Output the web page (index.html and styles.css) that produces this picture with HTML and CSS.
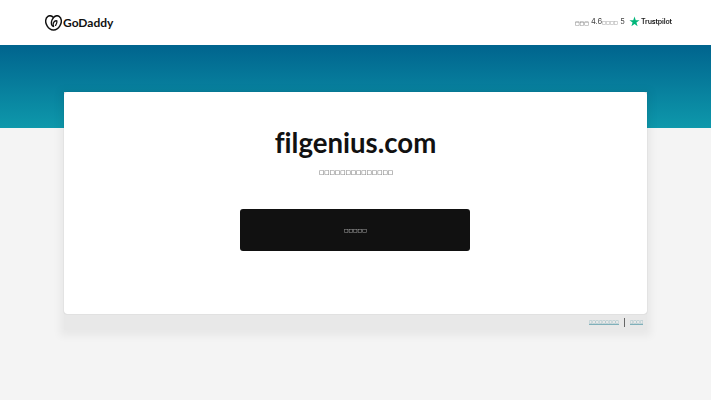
FILE: index.html
```html
<!DOCTYPE html>
<html lang="en">
<head>
<meta charset="utf-8">
<title>filgenius.com</title>
<link rel="stylesheet" href="styles.css">
</head>
<body>
<header class="topbar">
  <a class="logo" href="#">
    <svg class="logo-mark" viewBox="0 0 20 18" width="17" height="16" aria-hidden="true">
      <path d="M16.600 1.200c-2-1.300-4.700-.6-6.600 1.300C8.100.6 5.400-.1 3.400 1.200.3 3.200-.1 8.300 2.500 12.500c1.900 3.100 5 4.900 7.500 4.800 2.500.1 5.600-1.700 7.500-4.800 2.600-4.200 2.200-9.300-.9-11.300z" fill="none" stroke="#111" stroke-width="1.700"/>
      <path d="M10 2.600C8 5 7 8 7.600 10.500c.3 1.200 1 2.100 2 2.600M14 6.500c-1.700-.5-3.500.7-4.200 2.700-.4 1.300-.3 2.700.4 3.600M14 6.500c.2 1.700-.3 3.700-1.500 5.300" fill="none" stroke="#111" stroke-width="1.500" stroke-linecap="round"/>
    </svg>
    <span class="logo-text">GoDaddy</span>
  </a>
  <div class="rating">
    <span class="box-text rating-label">□□□</span>
    <span class="rating-score">4.6<span class="box-text tofu">□□□□</span> 5</span>
    <span class="trustpilot">
      <svg class="tp-star" viewBox="0 0 24 24" width="11" height="11" aria-hidden="true"><path d="M12 1l2.700 8.200H23l-6.800 5 2.600 8.100L12 17.300l-6.800 5 2.600-8.100L1 9.200h8.300z" fill="#00b67a"/></svg>
      <span class="tp-text">Trustpilot</span>
    </span>
  </div>
</header>
<main class="stage">
  <div class="panel">
    <section class="card">
      <h1 class="domain">filgenius.com</h1>
      <p class="subtitle"><span class="box-text">□□□□□□□□□□□□□□</span></p>
      <a class="cta" href="#"><span class="box-text">□□□□□</span></a>
    </section>
    <footer class="legal">
      <a href="#" class="legal-link"><span class="box-text">□□□□□□□□□</span></a>
      <span class="legal-sep"></span>
      <a href="#" class="legal-link"><span class="box-text">□□□□</span></a>
    </footer>
  </div>
</main>
</body>
</html>
```
FILE: styles.css
```css
* { box-sizing: border-box; }
html, body { margin: 0; height: 100%; }
body {
  background: #f4f4f4;
  font-family: "Lato", "Liberation Sans", sans-serif;
  color: #111;
  overflow: hidden;
}
a { color: inherit; text-decoration: none; }
.box-text {
  font-family: "DejaVu Sans", sans-serif;
  display: inline-block;
  will-change: transform;
}
.topbar {
  height: 45px;
  background: #fff;
  display: flex;
  align-items: center;
  justify-content: space-between;
  padding: 0 39px 0 45px;
}
.logo { display: flex; align-items: center; gap: 1px; }
.logo-mark { display: block; }
.logo-text {
  font-size: 12px;
  font-weight: 700;
  color: #111;
}
.rating {
  display: flex;
  align-items: center;
  font-size: 7.500px;
  color: #444;
  margin-top: -2px;
}
.rating-label { font-size: 4.900px; color: #333; margin-right: 3px; margin-top: 2px; }
.rating-score { margin-right: 4px; font-family: "Inter", sans-serif; will-change: transform; }
.tofu { font-size: 4.200px; color: #555; }
.trustpilot { display: flex; align-items: center; gap: 1px; }
.tp-text { font-family: "Inter", sans-serif; font-size: 7px; font-weight: 600; color: #191919; letter-spacing: -0.15px; will-change: transform; }
.stage {
  background:
    linear-gradient(#00648e, #0e98ab) top / 100% 83px no-repeat;
  padding-top: 47px;
  display: flex;
  justify-content: center;
}
.panel {
  width: 583px;
  background: #e8e8e8;
  box-shadow: 0 2px 8px 4px rgba(0, 0, 0, 0.05);
}
.card {
  height: 222px;
  background: #fff;
  border-radius: 3px;
  display: flex;
  flex-direction: column;
  align-items: center;
  box-shadow: 0 0 1px rgba(0, 0, 0, 0.3);
}
.domain {
  margin: 34px 0 0;
  font-size: 27.600px;
  line-height: 34px;
  font-weight: 700;
  color: #111;
  font-variant-ligatures: none;
}
.subtitle {
  margin: 7px 0 0;
  font-size: 5.600px;
  line-height: 10px;
  color: #222;
}
.cta {
  margin: 32px 1px 0 0;
  width: 230px;
  height: 42px;
  background: #111;
  border-radius: 3px;
  color: #eee;
  font-size: 4.800px;
  display: flex;
  align-items: center;
  justify-content: center;
}
.legal {
  height: 16px;
  display: flex;
  align-items: center;
  justify-content: flex-end;
  gap: 5px;
  padding-right: 4px;
}
.legal-link {
  font-size: 3.500px;
  line-height: 4px;
  color: #5d9aa6;
  border-bottom: 1px solid #7fb0ba;
}
.legal-sep { width: 1px; height: 9px; background: #666; }
```
